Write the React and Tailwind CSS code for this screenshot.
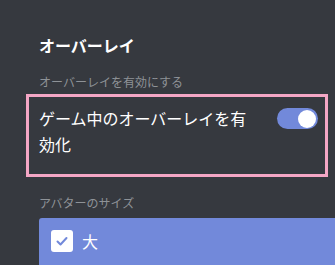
import { useState } from "react";

function Toggle({ on, onChange }) {
  return (
    <button
      onClick={() => onChange(!on)}
      className={`relative shrink-0 w-[41px] h-[21px] mt-[3px] rounded-full ${
        on ? "bg-[#7289da]" : "bg-[#72767d]"
      }`}
    >
      <span
        className={`absolute top-[1.5px] w-[18px] h-[18px] rounded-full bg-white ${
          on ? "right-[2px]" : "left-[2px]"
        }`}
      />
    </button>
  );
}

export default function App() {
  const [overlay, setOverlay] = useState(true);

  return (
    <div
      className="w-[335px] h-[265px] overflow-hidden bg-[#36393f] pl-[26px] pt-[35px]"
      style={{ fontFamily: '"Noto Sans CJK JP", "Noto Sans", sans-serif' }}
    >
      <h1 className="pl-[13px] text-[16px] leading-[20px] font-bold text-white">
        オーバーレイ
      </h1>

      <p className="pl-[13px] mt-[19px] text-[12px] leading-[16px] text-[#8e9297]">
        オーバーレイを有効にする
      </p>

      <div className="mt-[4px] w-[302px] h-[83px] border-[3px] border-[#f4a6c5] flex gap-[16px] pl-[10px] pr-[7px] pt-[8px]">
        <div className="flex-1 text-[16px] leading-[26px] text-white">
          ゲーム中のオーバーレイを有効化
        </div>
        <Toggle on={overlay} onChange={setOverlay} />
      </div>

      <p className="pl-[13px] mt-[18px] text-[12px] leading-[16px] text-[#8e9297]">
        アバターのサイズ
      </p>

      <div className="ml-[13px] mt-[7px] w-[310px] h-[60px] rounded-[3px] bg-[#7289da] flex items-start gap-[9px] pl-[12px] pt-[12px]">
        <span className="w-[22px] h-[22px] rounded-[3px] bg-white flex items-center justify-center">
          <svg width="14" height="14" viewBox="0 0 14 14" fill="none">
            <path
              d="M2.5 7.5 L5.5 10.5 L11.5 4"
              stroke="#7289da"
              strokeWidth="2"
              strokeLinecap="round"
              strokeLinejoin="round"
            />
          </svg>
        </span>
        <span className="text-[16px] leading-[22px] text-white">大</span>
      </div>
    </div>
  );
}
